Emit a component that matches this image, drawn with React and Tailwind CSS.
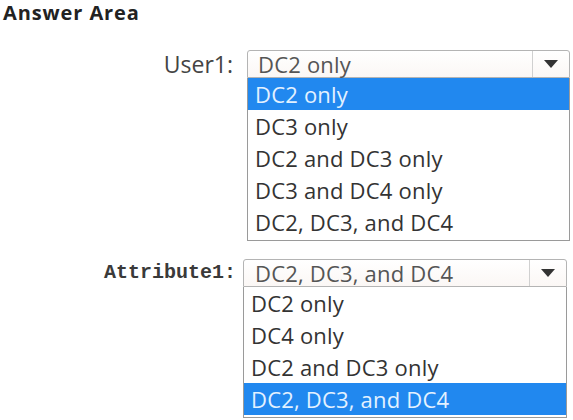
import React from 'react';

const Arrow = () => (
  <svg width="14" height="8" viewBox="0 0 14 8">
    <path d="M0 0 L14 0 L7 8 Z" fill="#333" />
  </svg>
);

const Dropdown = ({ value, options, selected, className, pad }) => {
  return (
    <div className={`flex flex-col ${className}`}>
      <div className="flex h-[28px] items-stretch rounded-t-[3px] border border-[#b4b4b4] bg-gradient-to-b from-white to-[#fbf7f5]">
        <div className={`flex flex-1 items-center ${pad} text-[22px] leading-none tracking-[0.2px] text-[#555]`}>{value}</div>
        <div className="flex w-[37px] items-center justify-center border-l border-[#d0d0d0]">
          <Arrow />
        </div>
      </div>
      <div className="flex flex-col border border-t-0 border-[#9a9a9a] bg-white pb-[2px]">
        {options.map((opt) => (
          <div
            key={opt}
            className={`flex h-[32px] items-center pl-[7px] text-[22px] leading-none tracking-[0.2px] ${
              opt === selected ? 'bg-[#2188ef] text-[#e3f1ff]' : 'text-[#333]'
            }`}
          >
            {opt}
          </div>
        ))}
      </div>
    </div>
  );
};

export default function App() {
  return (
    <div className="h-[420px] w-[573px] bg-white font-['Open_Sans',sans-serif]">
      <h1 className="pl-[3px] pt-[1px] text-[20px] font-bold leading-[24px] tracking-[0.9px] text-[#222]">Answer Area</h1>

      <div className="mt-[25px] flex items-start">
        <div className="w-[233px] text-right text-[23px] leading-[28px] text-[#444]">User1:</div>
        <Dropdown
          className="ml-[14px] w-[323px]"
          pad="pl-[10px]"
          value="DC2 only"
          selected="DC2 only"
          options={['DC2 only', 'DC3 only', 'DC2 and DC3 only', 'DC3 and DC4 only', 'DC2, DC3, and DC4']}
        />
      </div>

      <div className="mt-[18px] flex items-start">
        <div className="w-[236px] text-right font-['Liberation_Mono',monospace] text-[20px] font-bold leading-[28px] text-[#3a3a3a]">
          Attribute1:
        </div>
        <Dropdown
          className="ml-[7px] w-[324px]"
          pad="pl-[11px]"
          value="DC2, DC3, and DC4"
          selected="DC2, DC3, and DC4"
          options={['DC2 only', 'DC4 only', 'DC2 and DC3 only', 'DC2, DC3, and DC4']}
        />
      </div>
    </div>
  );
}
